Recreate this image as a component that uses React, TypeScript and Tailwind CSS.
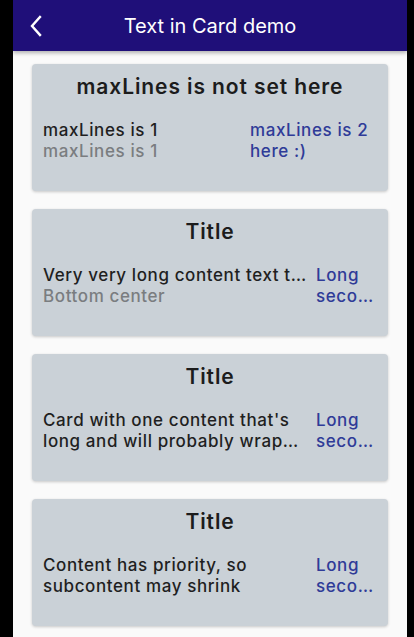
import React from 'react';

const font = { fontFamily: 'Inter, "Noto Sans", sans-serif' };

interface CardProps {
  title: string;
  left: React.ReactNode;
  right: React.ReactNode;
  rightClass: string;
}

const TextCard: React.FC<CardProps> = ({ title, left, right, rightClass }) => (
  <div className="h-[127px] rounded-[4px] bg-[#cad1d7] shadow-[0_1px_3px_rgba(0,0,0,0.2)] px-[11px] pt-[9px]">
    <h2 className="text-center text-[21px] leading-[28px] font-semibold tracking-[0.9px] text-[#1c1c1c]">{title}</h2>
    <div className="mt-[19px] flex text-[17px] leading-[21px] font-medium tracking-[0.6px]">
      <div className="flex-1 min-w-0 text-[#1f1f1f]">{left}</div>
      <div className={`shrink-0 text-[#2f3b98] ${rightClass}`}>{right}</div>
    </div>
  </div>
);

const LongSecondary = () => (
  <>
    <div>Long</div>
    <div className="truncate">secondary content</div>
  </>
);

export default function App() {
  return (
    <div className="w-[414px] h-[637px] bg-black flex overflow-hidden" style={font}>
      <div className="ml-[13px] w-[394px] h-full bg-[#fafafa] flex flex-col">
        <div className="h-[51px] shrink-0 bg-[#1f0f79] flex items-center relative shadow-[0_2px_4px_rgba(0,0,0,0.3)] z-10">
          <svg className="absolute left-[16px]" width="14" height="22" viewBox="0 0 14 22" fill="none">
            <path d="M11 2 L3 11 L11 20" stroke="white" strokeWidth="2.4" strokeLinecap="square" />
          </svg>
          <div className="w-full text-center text-white text-[20px] leading-none">Text in Card demo</div>
        </div>
        <div className="flex flex-col gap-[18px] px-[19px] pt-[13px]">
          <TextCard
            title="maxLines is not set here"
            rightClass="w-[127px]"
            left={
              <>
                <div className="truncate">maxLines is 1</div>
                <div className="truncate text-[#7a7d80]">maxLines is 1</div>
              </>
            }
            right={<div className="line-clamp-2">maxLines is 2 here :)</div>}
          />
          <TextCard
            title="Title"
            rightClass="w-[61px]"
            left={
              <div className="pr-[7px]">
                <div className="truncate">Very very long content text that overflows</div>
                <div className="truncate text-[#7a7d80]">Bottom center</div>
              </div>
            }
            right={<LongSecondary />}
          />
          <TextCard
            title="Title"
            rightClass="w-[61px]"
            left={
              <div className="pr-[7px] line-clamp-2">
                Card with one content that's long and will probably wrap over several lines
              </div>
            }
            right={<LongSecondary />}
          />
          <TextCard
            title="Title"
            rightClass="w-[61px]"
            left={<div className="pr-[7px] line-clamp-2">Content has priority, so subcontent may shrink</div>}
            right={<LongSecondary />}
          />
        </div>
      </div>
    </div>
  );
}
